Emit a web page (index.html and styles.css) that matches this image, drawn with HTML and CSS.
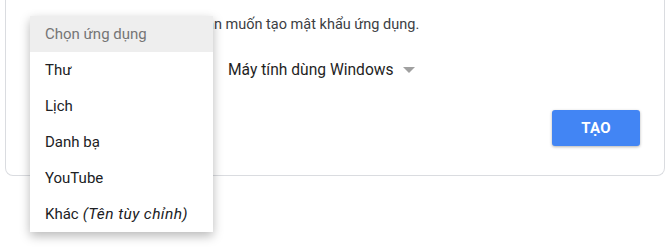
FILE: index.html
```html
<!DOCTYPE html>
<html lang="vi">
<head>
    <meta charset="UTF-8">
    <meta name="viewport" content="width=device-width, initial-scale=1.0">
    <title>Mật khẩu ứng dụng</title>
    <link rel="stylesheet" href="styles.css">
</head>
<body>
    <div class="page">
        <div class="card">
            <p class="card-desc">Chọn ứng dụng và thiết bị bạn muốn tạo mật khẩu ứng dụng.</p>

            <div class="select-row">
                <div class="select app-select">
                    <span class="caret"></span>
                </div>
                <div class="select device-select">
                    <span>Máy tính dùng Windows</span>
                    <span class="caret"></span>
                </div>
            </div>

            <div class="actions">
                <button class="create-button">TẠO</button>
            </div>

            <!-- App dropdown (open) -->
            <ul class="menu">
                <li class="menu-item placeholder">Chọn ứng dụng</li>
                <li class="menu-item">Thư</li>
                <li class="menu-item">Lịch</li>
                <li class="menu-item">Danh bạ</li>
                <li class="menu-item">YouTube</li>
                <li class="menu-item">Khác <em>(Tên tùy chỉnh)</em></li>
            </ul>
        </div>
    </div>
</body>
</html>
```

FILE: styles.css
```css
* {
    margin: 0;
    padding: 0;
    box-sizing: border-box;
}

html, body {
    height: 100%;
}

body {
    background: #fff;
    font-family: Roboto, "Liberation Sans", Arial, sans-serif;
    color: #202124;
}

.page {
    min-height: 251px;
}

.card {
    position: relative;
    width: 660px;
    margin-left: 5px;
    padding: 15px 24px 29px 24px;
    border: 1px solid #dadce0;
    border-top: none;
    border-radius: 0 0 8px 8px;
}

.card-desc {
    font-size: 14.5px;
    line-height: 20px;
    color: #3c4043;
}

.select-row {
    display: flex;
    align-items: center;
    height: 36px;
    margin-top: 17px;
}

.select {
    display: flex;
    align-items: center;
    font-size: 15px;
    color: #202124;
}

.app-select {
    width: 183px;
    margin-right: 15px;
}

.device-select span:first-child {
    font-size: 15.6px;
    font-weight: 400;
    color: #1f1f1f;
}

.caret {
    width: 0;
    height: 0;
    margin-left: 9px;
    border-left: 6px solid transparent;
    border-right: 6px solid transparent;
    border-top: 6px solid #a0a0a0;
}

.actions {
    display: flex;
    justify-content: flex-end;
    margin-top: 22px;
}

.create-button {
    width: 88px;
    height: 36px;
    background: #4285f4;
    color: #fff;
    border: none;
    border-radius: 3px;
    font-family: Roboto, "Liberation Sans", Arial, sans-serif;
    font-size: 15px;
    font-weight: 700;
    letter-spacing: 0.3px;
    box-shadow: 0 1px 3px rgba(0, 0, 0, 0.3);
}

/* dropdown */
.menu {
    position: absolute;
    top: 16px;
    left: 24px;
    z-index: 10;
    width: 183px;
    list-style: none;
    background: #fff;
    box-shadow: 0 4px 10px rgba(0, 0, 0, 0.28);
}

.menu-item {
    height: 36px;
    padding: 0 15px;
    display: flex;
    align-items: center;
    font-size: 15px;
    color: #202124;
    white-space: nowrap;
}

.menu-item.placeholder {
    background: #eeeeee;
    color: #757575;
}

.menu-item em {
    margin-left: 4px;
    font-size: 15.5px;
    letter-spacing: 0.4px;
}
```
